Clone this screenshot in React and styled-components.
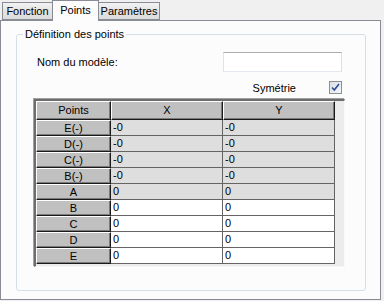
import React from "react";
import styled, { createGlobalStyle } from "styled-components";

const Global = createGlobalStyle`
  html, body { margin: 0; padding: 0; background: #f0f0f0; }
  body { font-family: "Liberation Sans", Arial, sans-serif; font-size: 11px; color: #000; }
  * { box-sizing: border-box; }
`;

const Window = styled.div`
  width: 384px;
  height: 301px;
  background: #f0f0f0;
  display: flex;
  flex-direction: column;
  overflow: hidden;
`;

const TabStrip = styled.div`
  display: flex;
  align-items: flex-end;
  height: 20px;
  padding-left: 2px;
  position: relative;
  z-index: 2;
`;

const Tab = styled.div`
  width: ${(p) => p.$w}px;
  height: ${(p) => (p.$active ? 21 : 18)}px;
  margin-bottom: ${(p) => (p.$active ? -1 : 0)}px;
  margin-left: ${(p) => (p.$first ? 0 : -1)}px;
  border: 1px solid #898c95;
  border-bottom: ${(p) => (p.$active ? "none" : "1px solid #898c95")};
  background: ${(p) =>
    p.$active ? "#fcfcfc" : "linear-gradient(#f2f2f2, #e4e4e4 50%, #dcdcdc)"};
  display: flex;
  align-items: ${(p) => (p.$active ? "flex-start" : "center")};
  justify-content: center;
  padding-top: ${(p) => (p.$active ? 3 : 0)}px;
  position: relative;
  z-index: ${(p) => (p.$active ? 2 : 1)};
  line-height: 13px;
`;

const Panel = styled.div`
  width: 381px;
  height: 280px;
  border: 1px solid #898c95;
  background: #fcfcfc;
  padding: 7px 0 0 15px;
`;

const Group = styled.fieldset`
  margin: 0;
  width: 350px;
  height: 263px;
  border: 1px solid #d5dfe5;
  border-radius: 3px;
  padding: 0;
  display: flex;
  flex-direction: column;
`;

const Legend = styled.legend`
  margin-left: 6px;
  padding: 0 2px;
  line-height: 13px;
  font-size: 11px;
`;

const NameRow = styled.div`
  display: flex;
  align-items: center;
  justify-content: space-between;
  margin-top: 11px;
  padding: 0 23px 0 20px;
`;

const TextInput = styled.div`
  width: 119px;
  height: 20px;
  background: #fff;
  border: 1px solid #abadb3;
  border-color: #abadb3 #dbdfe6 #e3e9ef #e2e3ea;
  box-shadow: inset 0 0 0 0 #fff;
  outline: 1px solid transparent;
`;

const SymRow = styled.div`
  display: flex;
  align-items: center;
  justify-content: flex-end;
  gap: 33px;
  margin-top: 9px;
  padding-right: 23px;
  height: 13px;
`;

const CheckBox = styled.div`
  width: 13px;
  height: 13px;
  border: 1px solid #8e8f8f;
  background: linear-gradient(135deg, #dcdfe4, #f4f6f8);
  display: flex;
  align-items: center;
  justify-content: center;
`;

const GridBox = styled.div`
  margin: 5px 0 0 17px;
  width: 311px;
  height: 168px;
  background: #ececec;
  border-top: 2px solid #6d6d6d;
  border-left: 2px solid #6d6d6d;
  border-right: 1px solid #f8f8f8;
  border-bottom: 1px solid #f8f8f8;
  box-shadow: -1px -1px 0 #a0a0a0;
`;

const Table = styled.div`
  display: grid;
  grid-template-columns: 75px 112px 112px;
  grid-template-rows: 19px repeat(9, 16px);
  width: 299px;
`;

const HeadCell = styled.div`
  background: #c0c0c0;
  border-top: 1px solid #fff;
  border-left: 1px solid #fff;
  border-right: 1px solid #1a1a1a;
  border-bottom: 1px solid #1a1a1a;
  box-shadow: inset -1px -1px 0 #7a7a7a;
  display: flex;
  align-items: center;
  justify-content: center;
  line-height: 13px;
  padding-top: ${(p) => (p.$row ? 1 : 0)}px;
`;

const DataCell = styled.div`
  background: ${(p) => (p.$gray ? "#dedede" : "#fff")};
  border-right: 1px solid #646464;
  border-bottom: 1px solid #646464;
  padding-left: 2px;
  display: flex;
  align-items: center;
  line-height: 13px;
`;

const rows = [
  ["E(-)", "-0", "-0", true],
  ["D(-)", "-0", "-0", true],
  ["C(-)", "-0", "-0", true],
  ["B(-)", "-0", "-0", true],
  ["A", "0", "0", true],
  ["B", "0", "0", false],
  ["C", "0", "0", false],
  ["D", "0", "0", false],
  ["E", "0", "0", false],
];

export default function App() {
  return (
    <Window>
      <Global />
      <TabStrip>
        <Tab $w={51} $first>Fonction</Tab>
        <Tab $w={47} $active>Points</Tab>
        <Tab $w={62}>Paramètres</Tab>
      </TabStrip>
      <Panel>
        <Group>
          <Legend>Définition des points</Legend>
          <NameRow>
            <span>Nom du modèle:</span>
            <TextInput />
          </NameRow>
          <SymRow>
            <span>Symétrie</span>
            <CheckBox>
              <svg width="9" height="9" viewBox="0 0 9 9">
                <path d="M1 4.5 L3.3 7 L8 1" fill="none" stroke="#2e4b96" strokeWidth="1.6" />
              </svg>
            </CheckBox>
          </SymRow>
          <GridBox>
            <Table>
              <HeadCell>Points</HeadCell>
              <HeadCell>X</HeadCell>
              <HeadCell>Y</HeadCell>
              {rows.map(([name, x, y, gray]) => (
                <React.Fragment key={name + gray}>
                  <HeadCell $row>{name}</HeadCell>
                  <DataCell $gray={gray}>{x}</DataCell>
                  <DataCell $gray={gray}>{y}</DataCell>
                </React.Fragment>
              ))}
            </Table>
          </GridBox>
        </Group>
      </Panel>
    </Window>
  );
}
